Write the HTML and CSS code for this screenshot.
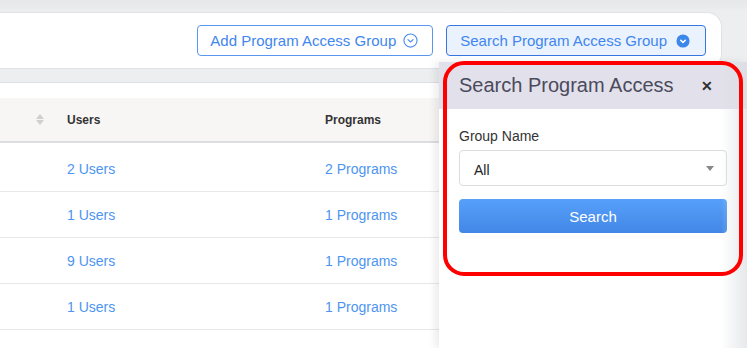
FILE: index.html
```html
<!DOCTYPE html>
<html>
<head>
<meta charset="utf-8">
<link rel="stylesheet" href="styles.css">
</head>
<body>
<div class="page">
  <div class="strip"></div>
  <div class="toolbar">
    <button class="btn btn-outline">Add Program Access Group
      <svg class="ico" width="15" height="15" viewBox="0 0 16 16"><circle cx="8" cy="8" r="7" fill="none" stroke="#4a8cf0" stroke-width="1.2"/><path d="M5.3 7l2.7 2.6L10.7 7" fill="none" stroke="#4a8cf0" stroke-width="1.2" stroke-linecap="round" stroke-linejoin="round"/></svg>
    </button>
    <button class="btn btn-active">Search Program Access Group
      <svg class="ico" width="14" height="14" viewBox="0 0 16 16"><circle cx="8" cy="8" r="7.5" fill="#3d86ea"/><path d="M5.3 7l2.7 2.6L10.7 7" fill="none" stroke="#fff" stroke-width="1.6" stroke-linecap="round" stroke-linejoin="round"/></svg>
    </button>
  </div>
  <div class="tablecard">
    <div class="thead">
      <div class="cell c1"><span class="sort"><i class="up"></i><i class="down"></i></span></div>
      <div class="cell c2 th">Users</div>
      <div class="cell c3 th">Programs</div>
    </div>
    <div class="tbody">
      <div class="row"><div class="cell c1"></div><div class="cell c2 link">2 Users</div><div class="cell c3 link">2 Programs</div></div>
      <div class="row"><div class="cell c1"></div><div class="cell c2 link">1 Users</div><div class="cell c3 link">1 Programs</div></div>
      <div class="row"><div class="cell c1"></div><div class="cell c2 link">9 Users</div><div class="cell c3 link">1 Programs</div></div>
      <div class="row"><div class="cell c1"></div><div class="cell c2 link">1 Users</div><div class="cell c3 link">1 Programs</div></div>
      <div class="row"><div class="cell c1"></div><div class="cell c2 link">1 Users</div><div class="cell c3 link">2 Programs</div></div>
    </div>
  </div>

  <div class="panel">
    <div class="panel-head">
      <span class="panel-title">Search Program Access</span>
      <span class="close">&#x2715;</span>
    </div>
    <div class="panel-body">
      <label class="label">Group Name</label>
      <div class="select"><span>All</span><i class="caret"></i></div>
      <button class="search-btn">Search</button>
    </div>
    <div class="edge"></div>
  </div>
  <div class="annot"></div>
</div>
</body>
</html>
```
FILE: styles.css
```css
* { box-sizing: border-box; }
html, body { margin: 0; padding: 0; }
body {
  font-family: "Liberation Sans", Arial, Helvetica, sans-serif;
  background: #eceef0;
  width: 747px;
  height: 348px;
  overflow: hidden;
}
.page { position: relative; width: 747px; height: 348px; overflow: hidden; }
.strip { height: 12px; background: linear-gradient(#e6e7e9, #eceef0); }
.toolbar {
  height: 57px;
  margin-right: 25px;
  background: #fff;
  border: 1px solid #dfe2e6;
  border-left: none;
  border-radius: 0 15px 15px 0;
  display: flex;
  justify-content: flex-end;
  align-items: center;
  gap: 13px;
  padding-right: 15px;
}
.btn {
  height: 31px;
  display: flex;
  align-items: center;
  gap: 7px;
  font-family: inherit;
  font-size: 15px;
  color: #3f86ee;
  border-radius: 4px;
  padding: 0 14px 0 12px;
  background: #fff;
  border: 1px solid #5b97f2;
}
.btn-active { background: #eaf2fe; border-color: #3675e2; padding: 0 15px 0 13px; gap: 9px; }
.ico { display: block; }
.tablecard {
  margin-top: 13px;
  background: #fff;
  border-top: 1px solid #dcdfe3;
  padding-top: 15px;
  height: 300px;
}
.thead {
  display: grid;
  grid-template-columns: 67px 258px 1fr;
  height: 45px;
  background: #f7f6f5;
  border-bottom: 2px solid #dcdee2;
  align-items: center;
}
.tbody { padding-top: 3px; }
.row {
  display: grid;
  grid-template-columns: 67px 258px 1fr;
  height: 46px;
  border-bottom: 1px solid #e8e8e8;
  align-items: center;
}
.cell { font-size: 14px; }
.th { font-size: 12px; font-weight: bold; color: #333; }
.link { color: #4d95f1; }
.c1 { display: flex; justify-content: flex-end; padding-right: 23px; }
.sort { display: flex; flex-direction: column; gap: 1px; }
.sort i { width: 0; height: 0; border-left: 4px solid transparent; border-right: 4px solid transparent; }
.sort .up { border-bottom: 5px solid #d0d0d0; }
.sort .down { border-top: 5px solid #d0d0d0; }

.panel {
  position: absolute;
  top: 62px;
  left: 439px;
  right: 0;
  bottom: 0;
  background: #fff;
  box-shadow: -4px 0 8px rgba(0,0,0,0.08);
}
.panel-head {
  height: 47px;
  background: #e2e0ea;
  display: flex;
  align-items: center;
  justify-content: space-between;
  padding: 0 34px 0 20px;
}
.panel-title { font-size: 20px; color: #4a4b5d; }
.close { font-size: 14px; font-weight: bold; color: #2f2f2f; }
.panel-body { padding: 19px 20px 0 20px; display: flex; flex-direction: column; }
.label { font-size: 14px; color: #333; line-height: 17px; margin-bottom: 5px; }
.select {
  height: 36px;
  border: 1px solid #dcdcdc;
  border-radius: 4px;
  display: flex;
  align-items: center;
  justify-content: space-between;
  padding: 3px 12px 0 14px;
  font-size: 14px;
  color: #222;
}
.caret { width: 0; height: 0; border-left: 4px solid transparent; border-right: 4px solid transparent; border-top: 5px solid #888; margin-top: -3px; }
.search-btn {
  margin-top: 13px;
  height: 34px;
  border: none;
  border-radius: 4px;
  background: linear-gradient(#56a0fa, #4387e6);
  color: #fff;
  font-family: inherit;
  font-size: 15px;
}
.edge {
  position: absolute;
  top: 0; right: 0; bottom: 0;
  width: 26px;
  background: linear-gradient(to right, rgba(220,222,226,0), rgba(220,222,226,0.7));
  pointer-events: none;
}
.annot {
  position: absolute;
  left: 443px;
  top: 61px;
  width: 300px;
  height: 215px;
  border: 4px solid #ff0000;
  border-radius: 21px;
  pointer-events: none;
}
```
